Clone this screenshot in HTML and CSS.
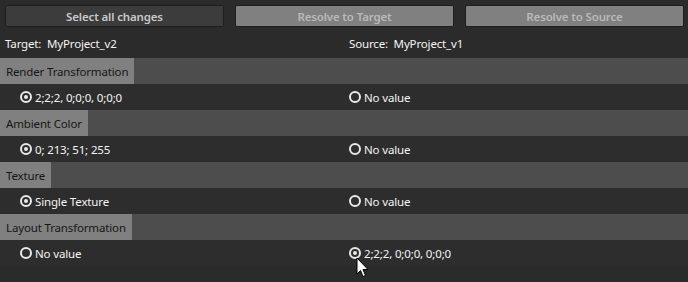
FILE: index.html
```html
<!DOCTYPE html>
<html lang="en">
<head>
    <meta charset="UTF-8">
    <title>Merge Conflicts</title>
    <link rel="stylesheet" href="styles.css">
</head>
<body>
    <div class="panel">
        <div class="toolbar">
            <button class="btn primary">Select all changes</button>
            <button class="btn">Resolve to Target</button>
            <button class="btn">Resolve to Source</button>
        </div>

        <div class="sides">
            <div class="side">Target:&nbsp; MyProject_v2</div>
            <div class="side">Source:&nbsp; MyProject_v1</div>
        </div>

        <div class="prop">
            <div class="prop-head"><span class="prop-name">Render Transformation</span></div>
            <div class="prop-row">
                <div class="choice"><span class="radio checked"></span>2;2;2, 0;0;0, 0;0;0</div>
                <div class="choice"><span class="radio"></span>No value</div>
            </div>
        </div>

        <div class="prop">
            <div class="prop-head"><span class="prop-name">Ambient Color</span></div>
            <div class="prop-row">
                <div class="choice"><span class="radio checked"></span>0; 213; 51; 255</div>
                <div class="choice"><span class="radio"></span>No value</div>
            </div>
        </div>

        <div class="prop">
            <div class="prop-head"><span class="prop-name">Texture</span></div>
            <div class="prop-row">
                <div class="choice"><span class="radio checked"></span>Single Texture</div>
                <div class="choice"><span class="radio"></span>No value</div>
            </div>
        </div>

        <div class="prop">
            <div class="prop-head"><span class="prop-name">Layout Transformation</span></div>
            <div class="prop-row">
                <div class="choice"><span class="radio"></span>No value</div>
                <div class="choice"><span class="radio checked"></span>2;2;2, 0;0;0, 0;0;0</div>
            </div>
        </div>

        <svg class="cursor" width="14" height="22" viewBox="0 0 14 22">
            <path d="M1 1 L1 17 L4.5 13.5 L7 19.5 L9.5 18.5 L7 12.5 L12 12.5 Z" fill="#fff" stroke="#000" stroke-width="1"/>
        </svg>
    </div>
</body>
</html>
```

FILE: styles.css
```css
* {
    box-sizing: border-box;
}
body {
    margin: 0;
    background: #2b2b2b;
    font-family: "Noto Sans", "Open Sans", sans-serif;
    font-size: 11.5px;
    letter-spacing: -0.15px;
    color: #f0f0f0;
}
.panel {
    position: relative;
    width: 688px;
    height: 282px;
    overflow: hidden;
    background: #2b2b2b;
}
.toolbar {
    display: flex;
    gap: 11px;
    padding: 5px 4px 0 5px;
}
.btn {
    flex: 1;
    height: 22px;
    border: 1px solid #1e1e1e;
    border-radius: 2px;
    background: #808080;
    color: #b9b9b9;
    font-family: inherit;
    font-size: 11.5px;
    letter-spacing: -0.15px;
    font-weight: 600;
    padding: 0;
}
.btn.primary {
    background: #3c3c3c;
    color: #c9c9c9;
}
.sides {
    display: flex;
    height: 31px;
    align-items: center;
    padding-top: 1px;
}
.side {
    width: 50%;
    padding-left: 5px;
    color: #f4f4f4;
}
.prop-head {
    height: 26px;
    background: #4d4d4d;
    display: flex;
}
.prop-name {
    display: flex;
    align-items: center;
    padding: 0 6px;
    background: #808080;
    color: #161616;
}
.prop-row {
    height: 26px;
    display: flex;
    align-items: center;
    background: #2d2d2d;
}
.choice {
    width: 50%;
    display: flex;
    align-items: center;
    padding-left: 20px;
    color: #f4f4f4;
}
.choice + .choice {
    padding-left: 5px;
}
.radio {
    width: 12px;
    height: 12px;
    border: 2.5px solid #e8e8e8;
    border-radius: 50%;
    margin-right: 3px;
    background: #2d2d2d;
    position: relative;
}
.radio.checked::after {
    content: "";
    position: absolute;
    left: 1.5px;
    top: 1.5px;
    width: 4px;
    height: 4px;
    border-radius: 50%;
    background: #e8e8e8;
}
.cursor {
    position: absolute;
    left: 356px;
    top: 257px;
}
```
